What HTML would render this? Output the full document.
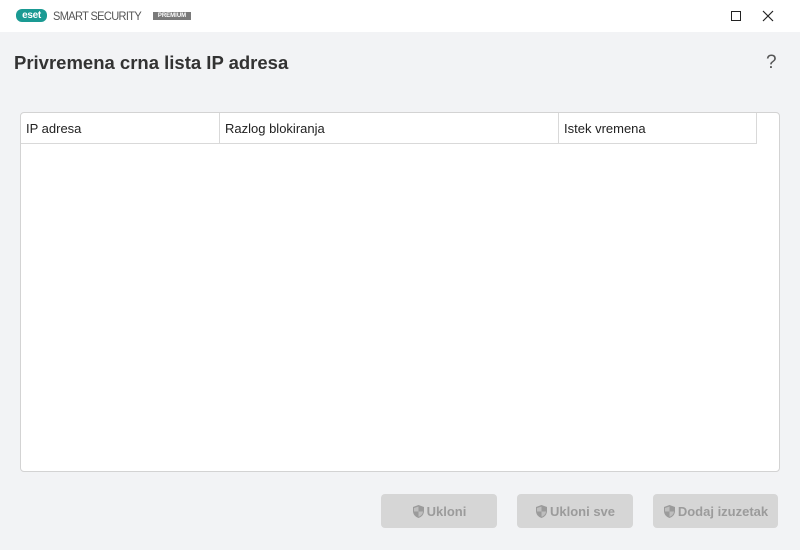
<!DOCTYPE html>
<html><head><style>
*{margin:0;padding:0;box-sizing:border-box}
body{width:800px;height:550px;background:#f2f3f5;font-family:"Liberation Sans",sans-serif;position:relative;overflow:hidden}
.tb{position:absolute;left:0;top:0;width:800px;height:32px;background:#fff}
.abs{position:absolute}
h1{position:absolute;left:14px;top:52px;font-size:18.5px;font-weight:bold;color:#333}
.box{position:absolute;left:20px;top:112px;width:760px;height:360px;background:#fff;border:1px solid #d3d3d3;border-radius:4px}
.hd{position:absolute;top:0;height:31px;border-bottom:1px solid #d9d9d9;border-right:1px solid #d9d9d9;font-size:13px;color:#222;padding:8px 0 0 5px}
.btn{position:absolute;top:494px;height:34px;background:#d6d6d6;border-radius:4px;color:#9b9b9b;font-weight:bold;font-size:13px;display:flex;align-items:center;justify-content:center;gap:2px}
</style></head><body>
<div class="tb"></div>
<div class="abs" style="left:16px;top:9px;width:31px;height:13px;background:#1a9a93;border-radius:6px;color:#fff;font-size:10px;font-weight:bold;line-height:13px;text-align:center;letter-spacing:-0.3px">eset</div>
<div class="abs" style="left:53px;top:9px;font-size:12px;color:#555;letter-spacing:-0.7px;transform:scaleX(0.92);transform-origin:left">SMART SECURITY</div>
<div class="abs" style="left:153px;top:12px;width:38px;height:8px;background:#7a7a7a;color:#fff;font-size:6px;line-height:8px;text-align:center;font-weight:bold">PREMIUM</div>
<div class="abs" style="left:731px;top:11px;width:10px;height:10px;border:1px solid #222"></div>
<svg class="abs" style="left:762px;top:10px" width="12" height="12"><path d="M1 1L11 11M11 1L1 11" stroke="#222" stroke-width="1.2"/></svg>
<h1>Privremena crna lista IP adresa</h1>
<div class="abs" style="left:766px;top:52px;font-size:19px;color:#555">?</div>
<div class="box">
<div class="hd" style="left:0;width:199px">IP adresa</div>
<div class="hd" style="left:199px;width:339px">Razlog blokiranja</div>
<div class="hd" style="left:538px;width:198px">Istek vremena</div>
</div>
<div class="btn" style="left:381px;width:116px"><svg width="13" height="15" viewBox="0 0 13 15"><path d="M6.5 1L12 3V7C12 10.5 9.5 13 6.5 14C3.5 13 1 10.5 1 7V3Z" fill="#9b9b9b"/><path d="M6.5 2.5V7.5H11C10.8 10 9 12 6.5 12.8Z M6.5 7.5H2V4L6.5 2.5" fill="#d6d6d6" opacity=".6"/></svg>Ukloni</div>
<div class="btn" style="left:517px;width:116px"><svg width="13" height="15" viewBox="0 0 13 15"><path d="M6.5 1L12 3V7C12 10.5 9.5 13 6.5 14C3.5 13 1 10.5 1 7V3Z" fill="#9b9b9b"/><path d="M6.5 2.5V7.5H11C10.8 10 9 12 6.5 12.8Z M6.5 7.5H2V4L6.5 2.5" fill="#d6d6d6" opacity=".6"/></svg>Ukloni sve</div>
<div class="btn" style="left:653px;width:125px"><svg width="13" height="15" viewBox="0 0 13 15"><path d="M6.5 1L12 3V7C12 10.5 9.5 13 6.5 14C3.5 13 1 10.5 1 7V3Z" fill="#9b9b9b"/><path d="M6.5 2.5V7.5H11C10.8 10 9 12 6.5 12.8Z M6.5 7.5H2V4L6.5 2.5" fill="#d6d6d6" opacity=".6"/></svg>Dodaj izuzetak</div>
</body></html>
